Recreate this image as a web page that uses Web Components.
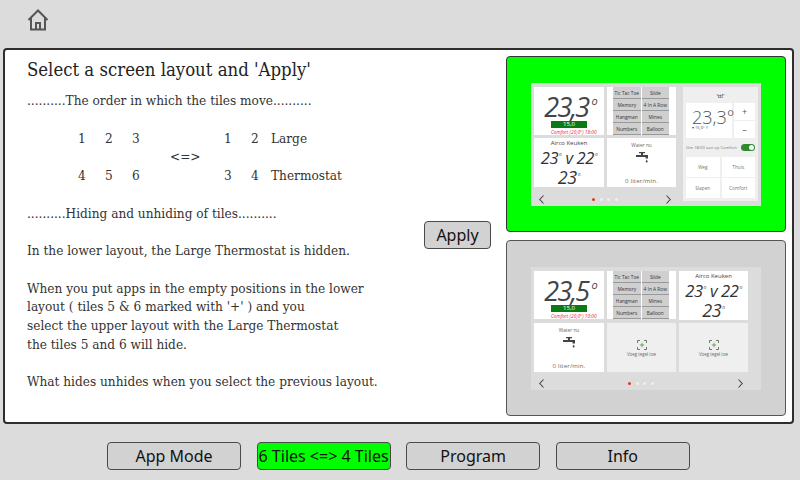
<!DOCTYPE html>
<html>
<head>
<meta charset="utf-8">
<title>Screen layout</title>
<style>
    html, body { margin: 0; padding: 0; width: 800px; height: 480px; overflow: hidden; background: #dcdcdc; }
</style>
</head>
<body>
<layout-page></layout-page>
<script>
/** Small helper: a class with an open shadow root holding the given markup. */
function shadowElement(markup) {
    return class extends HTMLElement {
        constructor() {
            super();
            this.attachShadow({ mode: 'open' }).innerHTML = markup(this);
        }
    };
}

const attr = (el, name, fallback) => el.getAttribute(name) || fallback;

/** Grey or green rounded button, used in the footer and for Apply. */
customElements.define('nav-button', shadowElement(() => `
    <style>
        :host { display: flex; align-items: center; justify-content: center; box-sizing: border-box;
            width: 134px; height: 28px; border: 1px solid #4a4a4a; border-radius: 4px; background: #d2d2d2;
            font: 16px "Noto Sans", sans-serif; color: #111; white-space: nowrap; }
        :host([active]) { background: #00ff00; }
        :host([compact]) { width: 67px; }
    </style>
    <slot></slot>
`));

/** Selectable frame around a small screen picture. */
customElements.define('layout-preview', shadowElement(() => `
    <style>
        :host { display: flex; align-items: center; justify-content: center; box-sizing: border-box;
            width: 280px; height: 176px; border: 1px solid #555; border-radius: 4px; background: #d2d2d2; }
        :host([active]) { background: #00ff00; border-color: #333; }
    </style>
    <slot></slot>
`));

/** Miniature of the home screen: tiles with carousel footer, optional side panel. */
customElements.define('mini-screen', shadowElement(() => `
    <style>
        :host { display: flex; box-sizing: border-box; width: 230px; height: 123px; padding: 4px 3px 0; margin-top: 1px;
            background: #dcdcdc; font-family: "Open Sans", sans-serif; color: #444; }
        .main { display: flex; flex-direction: column; }
        .foot { display: flex; align-items: center; justify-content: space-between; box-sizing: border-box; height: 19px;
            padding: 5px 5px 0; }
        .dots { display: flex; gap: 4.5px; }
        .dots i { width: 3px; height: 3px; border-radius: 50%; background: #f0f0f0; }
        .dots i:first-child { background: #e8341c; }
        svg { width: 5px; height: 9px; fill: none; stroke: #444; stroke-width: 1.1; }
    </style>
    <div class="main">
        <slot></slot>
        <div class="foot">
            <svg viewBox="0 0 5 9"><path d="M4.5 .5 L.8 4.5 L4.5 8.5"/></svg>
            <div class="dots"><i></i><i></i><i></i><i></i></div>
            <svg viewBox="0 0 5 9"><path d="M.5 .5 L4.2 4.5 L.5 8.5"/></svg>
        </div>
    </div>
    <slot name="side"></slot>
`));

/** Thermostat summary tile with the big italic temperature. */
customElements.define('temp-tile', shadowElement((el) => `
    <style>
        :host { display: flex; flex-direction: column; align-items: center; background: #fff; height: 48px; }
        .big { font: italic 27px/28px "Open Sans", sans-serif; letter-spacing: -1.8px; color: #444; margin-top: 6px; height: 28px; white-space: nowrap; padding-left: 4px; }
        .big sup { font-size: 11px; line-height: 0; vertical-align: 12px; margin-left: 3px; letter-spacing: 0; }
        .bar { width: 36px; height: 7px; background: #0b7a14; color: #fff; font: 6px/7px "Open Sans", sans-serif; text-align: center; }
        .note { align-self: flex-start; margin: .5px 0 0 17px; font: italic 4.8px/7px "Open Sans", sans-serif; color: #f01818; white-space: nowrap; }
    </style>
    <div class="big">${attr(el, 'temp', '')}<sup>o</sup></div>
    <div class="bar">15,0</div>
    <div class="note">Comfort (20,0°) ${attr(el, 'time', '')}</div>
`));

/** Tile with the grid of game shortcuts. */
customElements.define('games-tile', shadowElement(() => `
    <style>
        :host { display: block; box-sizing: border-box; background: #fff; height: 48px; padding: 0 7px 0 6px; }
        .grid { display: grid; grid-template-columns: 1fr 1fr; grid-auto-rows: 1fr; gap: 0 1px; height: 100%; background: #fff; }
        .grid span { display: flex; align-items: center; justify-content: center; background: #cfcfcf; border-bottom: 1px solid #999;
            font: 4.8px "Open Sans", sans-serif; color: #333; white-space: nowrap; }
    </style>
    <div class="grid">
        <span>Tic Tac Toe</span><span>Slide</span>
        <span>Memory</span><span>4 In A Row</span>
        <span>Hangman</span><span>Mines</span>
        <span>Numbers</span><span>Balloon</span>
    </div>
`));

/** Airco tile with set and measured temperature. */
customElements.define('airco-tile', shadowElement(() => `
    <style>
        :host { display: flex; flex-direction: column; align-items: center; background: #fff; height: 49px; color: #333; }
        .name { font: 6px/9px "Open Sans", sans-serif; margin-top: 1px; color: #444; }
        .temp { font: italic 16.5px/19px "Open Sans", sans-serif; letter-spacing: -.4px; white-space: nowrap; }
        .temp sup { font-size: 5px; line-height: 0; vertical-align: 8px; color: #555; margin-left: 1px; }
        .temp.low { font-size: 18px; line-height: 19px; margin-top: 1px; }
    </style>
    <div class="name">Airco Keuken</div>
    <div class="temp">23<sup>o</sup> v 22<sup>o</sup></div>
    <div class="temp low">23<sup>o</sup></div>
`));

/** Water usage tile with a tap icon. */
customElements.define('water-tile', shadowElement(() => `
    <style>
        :host { display: flex; flex-direction: column; align-items: center; background: #fff; height: 49px; color: #666; }
        .name { font: 4.8px/7px "Open Sans", sans-serif; margin-top: 4px; }
        svg { width: 12px; height: 11px; margin-top: 3px; fill: #444; display: block; }
        .use { font: 6px/8px "Open Sans", sans-serif; margin-top: 14px; letter-spacing: .2px; }
    </style>
    <div class="name">Water nu</div>
    <svg viewBox="0 0 12 11"><path d="M3 0h6v1.200H7V3h5v3.500H9.500V5H0V3h5V1.200H3zM10.700 7.600l1 2a1 1 0 0 1-2 0z"/></svg>
    <div class="use">0 liter/min.</div>
`));

/** Empty tile position with the add marker. */
customElements.define('add-tile', shadowElement(() => `
    <style>
        :host { display: flex; flex-direction: column; align-items: center; background: #efefef; height: 49px; color: #666; }
        svg { width: 10px; height: 10px; margin-top: 17px; fill: none; stroke: #555; stroke-width: .8; display: block; }
        svg .plus { stroke: #4a9a3a; }
        span { font: 4.4px/7px "Open Sans", sans-serif; margin-top: 1px; white-space: nowrap; }
    </style>
    <svg viewBox="0 0 10 10"><path d="M3 .5H.5V3M7 .5h2.500V3M.5 7v2.500H3M9.500 7v2.500H7"/><path class="plus" d="M5 2.800v4.400M2.800 5h4.400"/></svg>
    <span>Voeg tegel toe</span>
`));

/** Large thermostat panel on the right of the upper layout. */
customElements.define('thermostat-panel', shadowElement(() => `
    <style>
        :host { display: flex; flex-direction: column; box-sizing: border-box; width: 75px; height: 114px; padding: 0 3px; background: #efefef; color: #777; margin-left: 7px; }
        .title { height: 16px; font: 600 5px/18px "Open Sans", sans-serif; text-align: center; color: #444; }
        .top { display: flex; gap: 2px; height: 35px; }
        .now { display: flex; flex-direction: column; width: 46px; box-sizing: border-box; padding: 6px 0 0 6px; background: #fff; }
        .now b { font: 300 18px/17px "Open Sans", sans-serif; color: #555; white-space: nowrap; }
        .now small { margin-top: -1px; font: 4px/6px "Open Sans", sans-serif; color: #444; white-space: nowrap; }
        .now small em { color: #2a9a3a; font-style: normal; }
        .steps { display: flex; flex-direction: column; gap: 1px; flex: 1; }
        .steps span { flex: 1; display: flex; align-items: center; justify-content: center; background: #fff; font: 9px "Open Sans", sans-serif; color: #555; }
        .row { display: flex; align-items: center; justify-content: space-between; height: 19px; font: 4.2px "Open Sans", sans-serif; white-space: nowrap; }
        .toggle { width: 14px; height: 7px; border-radius: 4px; background: #2f8a30; position: relative; flex: none; }
        .toggle::after { content: ""; position: absolute; right: 1px; top: 1px; width: 5px; height: 5px; border-radius: 50%; background: #fff; }
        .modes { display: grid; grid-template-columns: 1fr 1fr; grid-auto-rows: 20px; gap: 1px 2px; }
        .modes span { display: flex; align-items: center; justify-content: center; background: #fff; font: 4.8px "Open Sans", sans-serif; }
    </style>
    <div class="title">'tt!'</div>
    <div class="top">
        <div class="now"><b>23,3°</b><small>▾ 15,0° <em>Y</em></small></div>
        <div class="steps"><span>+</span><span>–</span></div>
    </div>
    <div class="row"><span>Om 18:00 aan op Comfort</span><div class="toggle"></div></div>
    <div class="modes"><span>Weg</span><span>Thuis</span><span>Slapen</span><span>Comfort</span></div>
`));

/** Page shell: home bar, content panel and bottom navigation. */
customElements.define('layout-page', shadowElement(() => `
    <style>
        :host { display: flex; flex-direction: column; width: 800px; height: 480px; background: #dcdcdc; }
        header { height: 48px; padding: 8px 0 0 27px; box-sizing: border-box; }
        header svg { display: block; width: 22px; height: 24px; fill: none; stroke: #555; stroke-width: 2; }
        .panel { display: flex; box-sizing: border-box; width: 791px; height: 376px; margin-left: 3px; border: 2px solid #2e2e2e; border-radius: 4px; background: #fff; }
        .copy { width: 396px; padding: 7px 0 0 22px; box-sizing: border-box;
            font: 13.500px/18.750px "DejaVu Serif Condensed", "Liberation Serif", serif; color: #333; }
        h1 { margin: 0 0 8px; font: 400 18.400px/26px "DejaVu Serif Condensed", "Liberation Serif", serif; color: #222; }
        p { margin: 0 0 18.750px; white-space: nowrap; }
        .order { display: grid; margin: 0 0 18.750px 51px; grid-template-columns: 27px 27px 38px 54px 27px 20px auto; grid-template-rows: repeat(3, 18.750px); }
        .order .swap { grid-column: 4; grid-row: 2; }
        .middle { width: 105px; display: flex; flex-direction: column; padding-top: 171px; box-sizing: border-box; }
        .middle nav-button { margin-left: 23px; }
        .previews { display: flex; flex-direction: column; gap: 8px; padding-top: 6px; }
        .grid6 { display: grid; grid-template-columns: 70px 69px 69px; gap: 3px; }
        .grid4 { display: grid; grid-template-columns: 70px 69px; gap: 3px; }
        footer { display: flex; gap: 15.600px; padding: 18px 0 0 107px; }
    </style>
    <header>
        <svg viewBox="0 0 22 24"><path d="M1.500 12 L11 2.500 L20.500 12 M4 10 V21.500 H18 V10 M9 21.500 V15 H13 V21.500"/></svg>
    </header>
    <section class="panel">
        <div class="copy">
            <h1>Select a screen layout and 'Apply'</h1>
            <p>..........The order in which the tiles move..........</p>
            <div class="order">
                <span>1</span><span>2</span><span>3</span><span></span><span>1</span><span>2</span><span>Large</span>
                <span class="swap">&lt;=&gt;</span>
                <span style="grid-row:3">4</span><span style="grid-row:3">5</span><span style="grid-row:3">6</span><span style="grid-row:3"></span><span style="grid-row:3">3</span><span style="grid-row:3">4</span><span style="grid-row:3">Thermostat</span>
            </div>
            <p>..........Hiding and unhiding of tiles..........</p>
            <p>In the lower layout, the Large Thermostat is hidden.</p>
            <p>When you put apps in the empty positions in the lower<br>
            layout ( tiles 5 &amp; 6 marked with '+' ) and you<br>
            select the upper layout with the Large Thermostat<br>
            the tiles 5 and 6 will hide.</p>
            <p>What hides unhides when you select the previous layout.</p>
        </div>
        <div class="middle"><nav-button compact>Apply</nav-button></div>
        <div class="previews">
            <layout-preview active>
                <mini-screen>
                    <div class="grid4">
                        <temp-tile temp="23,3" time="18:00"></temp-tile>
                        <games-tile></games-tile>
                        <airco-tile></airco-tile>
                        <water-tile></water-tile>
                    </div>
                    <thermostat-panel slot="side"></thermostat-panel>
                </mini-screen>
            </layout-preview>
            <layout-preview>
                <mini-screen>
                    <div class="grid6">
                        <temp-tile temp="23,5" time="10:00"></temp-tile>
                        <games-tile></games-tile>
                        <airco-tile></airco-tile>
                        <water-tile></water-tile>
                        <add-tile></add-tile>
                        <add-tile></add-tile>
                    </div>
                </mini-screen>
            </layout-preview>
        </div>
    </section>
    <footer>
        <nav-button>App Mode</nav-button>
        <nav-button active>6 Tiles &lt;=&gt; 4 Tiles</nav-button>
        <nav-button>Program</nav-button>
        <nav-button>Info</nav-button>
    </footer>
`));
</script>
</body>
</html>
